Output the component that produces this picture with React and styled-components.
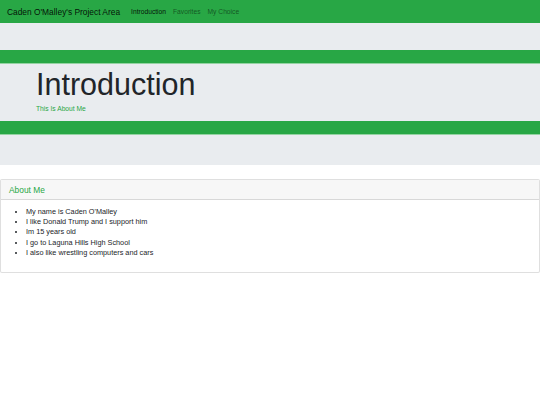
import React from "react"
import styled, { createGlobalStyle } from "styled-components"

const GlobalStyle = createGlobalStyle`
  body {
    margin: 0;
    background: #fff;
    font-family: "Liberation Sans", Arial, sans-serif;
    color: #212529;
  }
`

const Navbar = styled.nav`
  display: flex;
  align-items: center;
  height: 23px;
  padding: 0 7px;
  background: #28a745;
`

const Brand = styled.a`
  font-size: 8.4px;
  color: rgba(0, 0, 0, 0.9);
  margin-right: 11px;
`

const NavLinks = styled.div`
  display: flex;
  gap: 7px;
`

const NavLink = styled.a`
  font-size: 6.7px;
  color: ${(p) => (p.active ? "rgba(0, 0, 0, 0.9)" : "rgba(0, 0, 0, 0.5)")};
`

const Jumbotron = styled.section`
  background: #e9ecef;
  padding: 27px 0 30px;
`

const Band = styled.div`
  height: 13px;
  background: #28a745;
  border-bottom: 1px solid #94d3a2;
`

const Hero = styled.div`
  padding: 2px 36px 7px;
`

const Title = styled.h1`
  margin: 0 0 2px;
  font-size: 30.5px;
  line-height: 36px;
  font-weight: 400;
  color: #212529;
`

const Lead = styled.p`
  margin: 0;
  font-size: 6.7px;
  line-height: 10px;
  color: #28a745;
`

const Card = styled.div`
  margin-top: 14px;
  border: 1px solid rgba(0, 0, 0, 0.125);
  border-radius: 2px;
  background: #fff;
`

const CardHeader = styled.div`
  height: 19px;
  display: flex;
  align-items: center;
  padding: 0 9px 0 8px;
  background: #f7f7f7;
  border-bottom: 1px solid rgba(0, 0, 0, 0.125);
  font-size: 8.4px;
  color: #28a745;
`

const CardBody = styled.div`
  padding: 7px 0 14px;
`

const List = styled.ul`
  margin: 0;
  padding-left: 25px;
  font-size: 7.3px;
  line-height: 10.2px;
  color: #212529;
`

const items = [
  "My name is Caden O'Malley",
  "I like Donald Trump and I support him",
  "Im 15 years old",
  "I go to Laguna Hills High School",
  "I also like wrestling computers and cars",
]

export default function App() {
  return (
    <>
      <GlobalStyle />
      <Navbar>
        <Brand>Caden O'Malley's Project Area</Brand>
        <NavLinks>
          <NavLink active>Introduction</NavLink>
          <NavLink>Favorites</NavLink>
          <NavLink>My Choice</NavLink>
        </NavLinks>
      </Navbar>
      <Jumbotron>
        <Band />
        <Hero>
          <Title>Introduction</Title>
          <Lead>This Is About Me</Lead>
        </Hero>
        <Band />
      </Jumbotron>
      <Card>
        <CardHeader>About Me</CardHeader>
        <CardBody>
          <List>
            {items.map((t) => (
              <li key={t}>{t}</li>
            ))}
          </List>
        </CardBody>
      </Card>
    </>
  )
}
